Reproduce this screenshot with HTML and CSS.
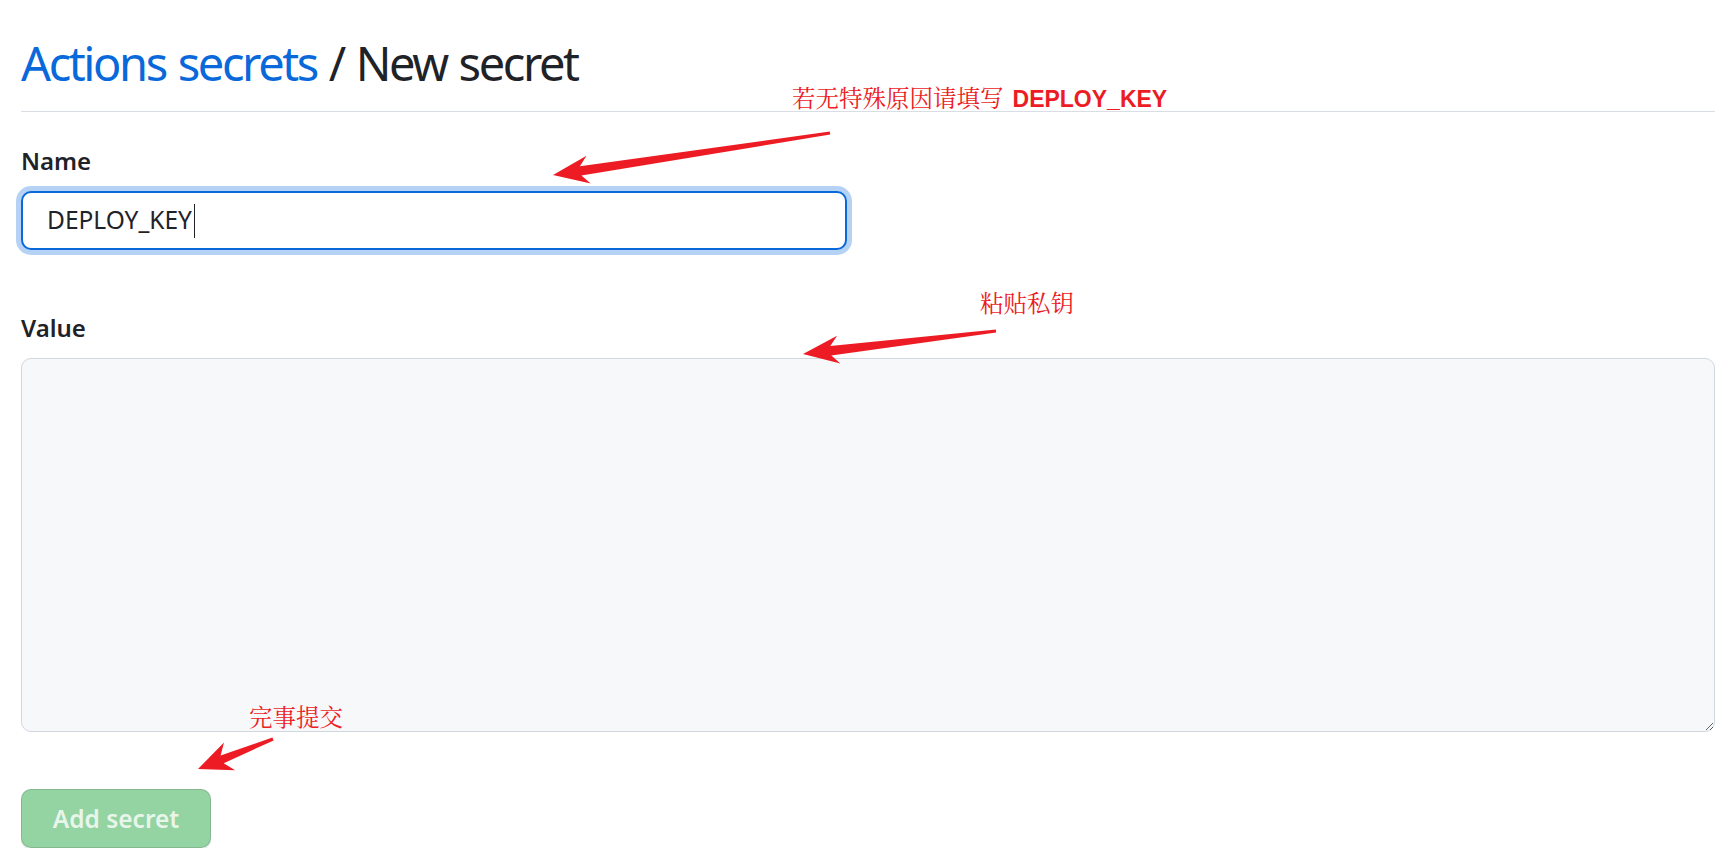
FILE: index.html
```html
<!DOCTYPE html>
<html lang="zh-CN">
<head>
    <meta charset="UTF-8">
    <meta name="viewport" content="width=device-width, initial-scale=1.0">
    <title>New secret</title>
    <link rel="stylesheet" href="styles.css">
</head>
<body>
    <div class="page">
        <!-- Título -->
        <div class="subhead">
            <h2 class="subhead-heading"><a href="#">Actions secrets</a> / New secret</h2>
        </div>

        <!-- Formulario -->
        <form class="secret-form">
            <div class="form-group">
                <label>Name</label>
                <div class="fake-input focused">DEPLOY_KEY<span class="caret"></span></div>
            </div>
            <div class="form-group value-group">
                <label for="value">Value</label>
                <textarea id="value" class="form-textarea"></textarea>
            </div>
            <button type="button" class="btn-primary" disabled>Add secret</button>
        </form>
    </div>

    <!-- Anotaciones -->
    <span class="note note-name">若无特殊原因请填写 <b>DEPLOY_KEY</b></span>
    <span class="note note-value">粘贴私钥</span>
    <span class="note note-submit">完事提交</span>

    <svg class="arrows" width="1735" height="865" viewBox="0 0 1735 865">
        <polygon points="830.2,134.5 581.4,175.4 590.7,183.4 553,175 586.5,155.8 579.9,166.2 829.8,131.5"/>
        <polygon points="996.1,332.5 831.3,355.5 840.4,363.6 803,354 837.1,335.8 830.3,345.9 995.9,329.5"/>
        <polygon points="273.6,740.4 223.7,763.2 235.1,770.3 198,769 224.0,742.5 220.6,755.5 272.4,737.6"/>
    </svg>
</body>
</html>
```

FILE: styles.css
```css
body {
    margin: 0;
    background-color: #fff;
    color: #1f2328;
    font-family: "Noto Sans", "Open Sans", sans-serif;
    overflow: hidden;
}
.page {
    padding: 0 20px 0 21px;
}
.subhead {
    padding-top: 33px;
    padding-bottom: 18px;
    border-bottom: 1px solid #d8dee4;
}
.subhead-heading {
    margin: 0;
    font-size: 47px;
    line-height: 60px;
    font-weight: 400;
    letter-spacing: -2.4px;
    word-spacing: 2px;
    color: #1f2328;
}
.subhead-heading a {
    color: #0969da;
    text-decoration: none;
}
.form-group {
    margin-top: 31px;
}
.value-group {
    margin-top: 60px;
}
.form-group label {
    display: block;
    font-size: 24px;
    line-height: 36px;
    font-weight: 600;
    margin-bottom: 12px;
}
.fake-input {
    box-sizing: border-box;
    width: 826px;
    height: 59px;
    display: flex;
    align-items: center;
    padding-left: 24px;
    font-size: 24.5px;
    line-height: 1;
    color: #1f2328;
    border: 2px solid #0969da;
    border-radius: 10px;
    background: #fff;
}
.fake-input.focused {
    box-shadow: 0 0 0 5px rgba(9, 105, 218, 0.3);
}
.caret {
    display: inline-block;
    width: 1px;
    height: 34px;
    margin-left: 2px;
    background: #1f2328;
}
.form-textarea {
    display: block;
    box-sizing: border-box;
    width: 100%;
    height: 374px;
    margin: 0;
    background-color: #f6f8fa;
    border: 1.5px solid #d0d7de;
    border-radius: 10px;
    resize: vertical;
}
.btn-primary {
    display: block;
    box-sizing: border-box;
    width: 190px;
    height: 59px;
    margin-top: 57px;
    padding: 0;
    font-family: inherit;
    font-size: 24.5px;
    font-weight: 600;
    color: rgba(255, 255, 255, 0.8);
    background-color: #94d3a2;
    border: 1.5px solid rgba(31, 35, 40, 0.15);
    border-radius: 10px;
    box-shadow: 0 2px 0 rgba(31, 35, 40, 0.08);
}
.note {
    position: absolute;
    color: #ed1c24;
    font-family: "Noto Serif CJK SC", "Noto Sans CJK SC", serif;
    font-size: 23.5px;
    line-height: 1;
    white-space: nowrap;
}
.note b {
    margin-left: 3px;
    font-family: "Liberation Sans", Arial, sans-serif;
    font-size: 23px;
    font-weight: 700;
}
.note-name {
    left: 792px;
    top: 86px;
}
.note-value {
    left: 980px;
    top: 291px;
}
.note-submit {
    left: 249px;
    top: 705px;
}
.arrows {
    position: absolute;
    left: 0;
    top: 0;
    pointer-events: none;
}
.arrows polygon {
    fill: #ed1c24;
}
```
